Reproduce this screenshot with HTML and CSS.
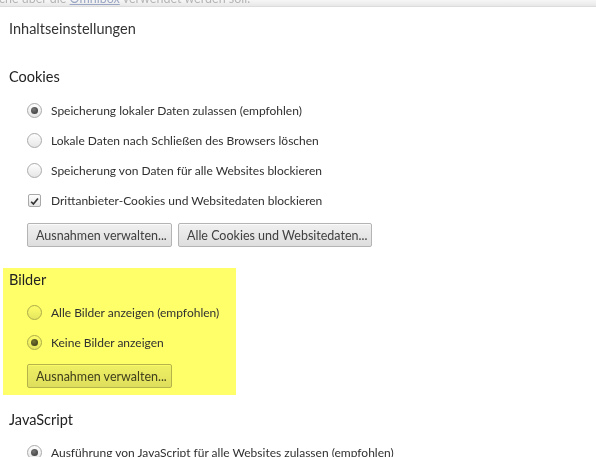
FILE: index.html
```html
<!DOCTYPE html>
<html lang="de">
<head>
    <meta charset="UTF-8">
    <title>Inhaltseinstellungen</title>
    <link rel="stylesheet" href="styles.css">
</head>
<body>
    <div class="topbar">
        <div class="topbar-text">che über die <a href="#">Omnibox</a> verwendet werden soll.</div>
    </div>

    <div class="page">
        <h1>Inhaltseinstellungen</h1>

        <section class="group">
            <h2>Cookies</h2>
            <label class="option"><span class="radio checked"></span>Speicherung lokaler Daten zulassen (empfohlen)</label>
            <label class="option"><span class="radio"></span>Lokale Daten nach Schließen des Browsers löschen</label>
            <label class="option"><span class="radio"></span>Speicherung von Daten für alle Websites blockieren</label>
            <label class="option"><span class="checkbox"><svg viewBox="0 0 13 13" width="13" height="13"><path d="M2.5 6.8 L5.2 9.4 L10.6 3" fill="none" stroke="#333" stroke-width="2"/></svg></span>Drittanbieter-Cookies und Websitedaten blockieren</label>
            <div class="buttons">
                <button>Ausnahmen verwalten...</button>
                <button>Alle Cookies und Websitedaten...</button>
            </div>
        </section>

        <section class="group highlight">
            <h2>Bilder</h2>
            <label class="option"><span class="radio"></span>Alle Bilder anzeigen (empfohlen)</label>
            <label class="option"><span class="radio checked"></span>Keine Bilder anzeigen</label>
            <div class="buttons">
                <button>Ausnahmen verwalten...</button>
            </div>
        </section>

        <section class="group js">
            <h2>JavaScript</h2>
            <label class="option"><span class="radio checked"></span>Ausführung von JavaScript für alle Websites zulassen (empfohlen)</label>
        </section>
    </div>
</body>
</html>
```

FILE: styles.css
```css
* { box-sizing: border-box; }
body { margin: 0; font-family: Lato, "Open Sans", sans-serif; font-size: 12px; color: #303030; background: #fff; overflow: hidden; }

.topbar { height: 7px; overflow: hidden; background: linear-gradient(#f6f6f6, #e8e8e8); border-bottom: 1px solid #dcdcdc; }
.topbar-text { margin-top: -8px; margin-left: -1px; font-size: 12.5px; line-height: 14px; color: #b4b4b4; white-space: nowrap; }
.topbar-text a { color: #9aa6c4; }

.page { padding-left: 9px; }
h1 { margin: 12px 0 0; font-size: 14.5px; font-weight: normal; line-height: 20px; color: #333; }

.group { margin-top: 28px; }
h2 { margin: 0 0 8px; font-size: 14.5px; font-weight: normal; line-height: 20px; color: #222; }

.option { display: flex; align-items: center; height: 30px; padding-left: 18px; white-space: nowrap; }
.radio { width: 15px; height: 15px; margin-right: 9px; border: 1px solid #aaa; border-radius: 50%; background: linear-gradient(#fefefe, #e6e6e6); display: flex; align-items: center; justify-content: center; }
.radio.checked::after { content: ""; width: 7px; height: 7px; border-radius: 50%; background: radial-gradient(circle at 40% 35%, #777, #333); }
.checkbox { width: 13px; height: 13px; margin: 0 10px 0 1px; border: 1px solid #a8a8a8; border-radius: 2px; background: linear-gradient(#fefefe, #e4e4e4); display: flex; }

.buttons { display: flex; gap: 6px; margin-top: 8px; padding-left: 18px; }
button { height: 24px; padding: 0 8px; font-family: inherit; font-size: 12.5px; color: #404040; white-space: nowrap; border: 1px solid #b4b4b4; border-radius: 2px; background: linear-gradient(#f0f0f0, #dedede); box-shadow: inset 0 1px 0 #fafafa; }
.buttons button:first-child { width: 145px; }
.buttons button:nth-child(2) { width: 194px; }

.highlight { width: 233px; margin: 21px 0 0 -6px; padding: 2px 6px 7px; background: #ffff6a; }
.highlight h2 { margin-bottom: 7px; }
.highlight .radio, .highlight button { mix-blend-mode: multiply; }
.highlight .buttons { margin-top: 7px; }

.js { margin-top: 15px; }
.js h2 { margin-bottom: 7px; }
```
